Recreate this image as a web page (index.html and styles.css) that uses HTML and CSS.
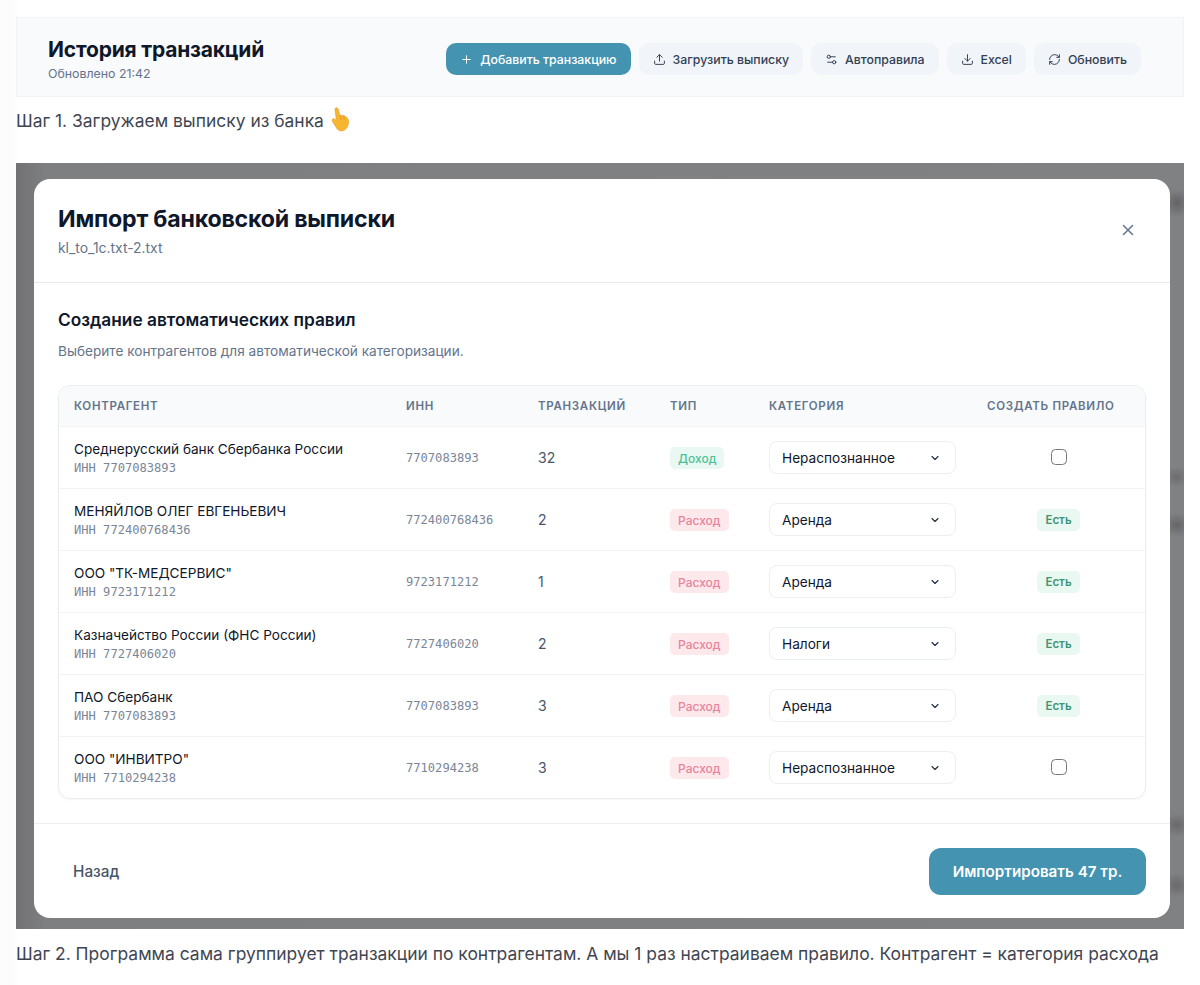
FILE: index.html
```html
<!DOCTYPE html>
<html lang="ru">
<head>
<meta charset="utf-8">
<title>История транзакций</title>
<link rel="stylesheet" href="styles.css">
</head>
<body>
<header class="topbar">
  <div class="topbar-title">
    <h1>История транзакций</h1>
    <div class="updated">Обновлено 21:42</div>
  </div>
  <div class="actions">
    <button class="btn btn-primary"><svg class="ico" viewBox="0 0 24 24"><path d="M5 12h14M12 5v14"/></svg>Добавить транзакцию</button>
    <button class="btn"><svg class="ico" viewBox="0 0 24 24"><path d="M21 15v4a2 2 0 0 1-2 2H5a2 2 0 0 1-2-2v-4"/><path d="M17 8l-5-5-5 5"/><path d="M12 3v12"/></svg>Загрузить выписку</button>
    <button class="btn"><svg class="ico" viewBox="0 0 24 24"><path d="M14 17H5"/><path d="M19 7h-9"/><circle cx="17" cy="17" r="3"/><circle cx="7" cy="7" r="3"/></svg>Автоправила</button>
    <button class="btn"><svg class="ico" viewBox="0 0 24 24"><path d="M21 15v4a2 2 0 0 1-2 2H5a2 2 0 0 1-2-2v-4"/><path d="M7 10l5 5 5-5"/><path d="M12 15V3"/></svg>Excel</button>
    <button class="btn"><svg class="ico" viewBox="0 0 24 24"><path d="M3 12a9 9 0 0 1 9-9 9.75 9.75 0 0 1 6.74 2.74L21 8"/><path d="M21 3v5h-5"/><path d="M21 12a9 9 0 0 1-9 9 9.75 9.75 0 0 1-6.74-2.74L3 16"/><path d="M8 16H3v5"/></svg>Обновить</button>
  </div>
</header>
<p class="step step-one">Шаг 1. Загружаем выписку из банка <svg class="hand" viewBox="0 0 20 26"><path class="hand-fill" d="M4.2 2.4C4 .4 7 .1 7.500 2L9.200 8.800C11 8.300 13.500 8.600 15.500 10C17.800 11.400 18.800 13.500 18.300 16.800C17.800 21 15.200 25 11 25C8 25 6.500 23.200 5 20.500L1.500 14.800C.5 13 2.300 11.300 3.800 12.500L5.800 14.200Z"/><path class="hand-line" d="M10 9.500L10.800 13M13.500 10L13.800 13.200"/></svg></p>
<section class="backdrop">
  <div class="modal">
    <div class="modal-head">
      <div>
        <h2>Импорт банковской выписки</h2>
        <div class="file">kl_to_1c.txt-2.txt</div>
      </div>
      <svg class="close" viewBox="0 0 24 24"><path d="M18 6L6 18M6 6l12 12"/></svg>
    </div>
    <div class="modal-body">
      <h3>Создание автоматических правил</h3>
      <p class="hint">Выберите контрагентов для автоматической категоризации.</p>
      <div class="table">
        <div class="row row-head">
          <div>Контрагент</div><div>ИНН</div><div>Транзакций</div><div>Тип</div><div>Категория</div><div>Создать правило</div>
        </div>
        <div class="row">
          <div><div class="name">Среднерусский банк Сбербанка России</div><div class="mono sub">ИНН 7707083893</div></div>
          <div class="mono">7707083893</div><div class="count">32</div>
          <div class="type"><span class="tag tag-in">Доход</span></div>
          <div><div class="select">Нераспознанное<svg class="chev" viewBox="0 0 24 24"><path d="M6 9l6 6 6-6"/></svg></div></div>
          <div class="rule"><span class="check"></span></div>
        </div>
        <div class="row">
          <div><div class="name">МЕНЯЙЛОВ ОЛЕГ ЕВГЕНЬЕВИЧ</div><div class="mono sub">ИНН 772400768436</div></div>
          <div class="mono">772400768436</div><div class="count">2</div>
          <div class="type"><span class="tag tag-out">Расход</span></div>
          <div><div class="select">Аренда<svg class="chev" viewBox="0 0 24 24"><path d="M6 9l6 6 6-6"/></svg></div></div>
          <div class="rule"><span class="tag tag-has">Есть</span></div>
        </div>
        <div class="row">
          <div><div class="name">ООО "ТК-МЕДСЕРВИС"</div><div class="mono sub">ИНН 9723171212</div></div>
          <div class="mono">9723171212</div><div class="count">1</div>
          <div class="type"><span class="tag tag-out">Расход</span></div>
          <div><div class="select">Аренда<svg class="chev" viewBox="0 0 24 24"><path d="M6 9l6 6 6-6"/></svg></div></div>
          <div class="rule"><span class="tag tag-has">Есть</span></div>
        </div>
        <div class="row">
          <div><div class="name">Казначейство России (ФНС России)</div><div class="mono sub">ИНН 7727406020</div></div>
          <div class="mono">7727406020</div><div class="count">2</div>
          <div class="type"><span class="tag tag-out">Расход</span></div>
          <div><div class="select">Налоги<svg class="chev" viewBox="0 0 24 24"><path d="M6 9l6 6 6-6"/></svg></div></div>
          <div class="rule"><span class="tag tag-has">Есть</span></div>
        </div>
        <div class="row">
          <div><div class="name">ПАО Сбербанк</div><div class="mono sub">ИНН 7707083893</div></div>
          <div class="mono">7707083893</div><div class="count">3</div>
          <div class="type"><span class="tag tag-out">Расход</span></div>
          <div><div class="select">Аренда<svg class="chev" viewBox="0 0 24 24"><path d="M6 9l6 6 6-6"/></svg></div></div>
          <div class="rule"><span class="tag tag-has">Есть</span></div>
        </div>
        <div class="row">
          <div><div class="name">ООО "ИНВИТРО"</div><div class="mono sub">ИНН 7710294238</div></div>
          <div class="mono">7710294238</div><div class="count">3</div>
          <div class="type"><span class="tag tag-out">Расход</span></div>
          <div><div class="select">Нераспознанное<svg class="chev" viewBox="0 0 24 24"><path d="M6 9l6 6 6-6"/></svg></div></div>
          <div class="rule"><span class="check"></span></div>
        </div>
      </div>
    </div>
    <div class="modal-foot">
      <button class="back">Назад</button>
      <button class="import">Импортировать 47 тр.</button>
    </div>
  </div>
</section>
<p class="step step-two">Шаг 2. Программа сама группирует транзакции по контрагентам. А мы 1 раз настраиваем правило. Контрагент = категория расхода</p>
</body>
</html>
```

FILE: styles.css
```css
* { box-sizing: border-box; }
html, body { margin: 0; background: #fff; }
body {
  width: 1200px;
  height: 985px;
  overflow: hidden;
  padding: 17px 16px 0;
  background: linear-gradient(90deg, #fcfcfc 0, #fcfcfc 14px, #fff 18px);
  font-family: Inter, "Noto Sans", sans-serif;
  color: #0f172a;
}
button { font-family: inherit; border: 0; }

.topbar {
  height: 80px;
  display: flex;
  align-items: center;
  justify-content: space-between;
  padding: 4px 42px 0 31px;
  background: #f9fafc;
  border: 1px solid #f1f3f6;
}
h1 { margin: 0; font-size: 21px; line-height: 26px; font-weight: 700; color: #0f172a; letter-spacing: -.2px; }
.updated { margin-top: 3px; font-size: 12.350px; line-height: 16px; color: #64748b; }
.actions { display: flex; gap: 8px; }
.btn {
  height: 32px;
  display: flex;
  align-items: center;
  gap: 7px;
  padding: 0 14px;
  border-radius: 10px;
  background: #f1f4f8;
  color: #334155;
  font-size: 12.300px;
  font-weight: 500;
}
.btn-primary { background: #4393b1; color: #fff; }
.ico { width: 13px; height: 13px; fill: none; stroke: currentColor; stroke-width: 1.800; stroke-linecap: round; stroke-linejoin: round; }

.step { margin: 0; font-size: 17.450px; line-height: 24px; color: #3f4652; }
.step-one { margin-top: 10px; height: 56px; }
.step-two { margin-top: 13px; white-space: nowrap; }
.hand { width: 19px; height: 25px; vertical-align: -5px; margin-left: 2px; }
.hand-fill { fill: #f6b62f; stroke: #e79a1f; stroke-width: .7; stroke-linejoin: round; }
.hand-line { fill: none; stroke: #e08f1c; stroke-width: .8; stroke-linecap: round; }

.backdrop {
  height: 766px;
  padding: 16px 14px 11px 18px;
  background:
    radial-gradient(ellipse 14px 14px at 1161px 40px, #636367, transparent),
    radial-gradient(ellipse 14px 10px at 1161px 314px, #6d6d70, transparent),
    radial-gradient(ellipse 14px 12px at 1161px 362px, #66666a, transparent),
    radial-gradient(ellipse 14px 12px at 1161px 662px, #69696d, transparent),
    radial-gradient(ellipse 14px 12px at 1161px 722px, #69696d, transparent),
    linear-gradient(90deg, #727274 0, #7e7f81 30px, #808183 100%);
}
.modal {
  height: 739px;
  display: flex;
  flex-direction: column;
  background: #fff;
  border-radius: 16px;
}
.modal-head {
  height: 104px;
  flex: none;
  display: flex;
  align-items: center;
  justify-content: space-between;
  padding: 0 33px 2px 24px;
  border-bottom: 1px solid #e7eaee;
}
h2 { margin: 1px 0 0; font-size: 23.150px; line-height: 30px; font-weight: 700; color: #0f172a; letter-spacing: -.2px; }
.file { margin-top: 5px; font-size: 13.900px; line-height: 18px; color: #64748b; }
.close { width: 18px; height: 18px; fill: none; stroke: #64748b; stroke-width: 2; stroke-linecap: round; stroke-linejoin: round; }

.modal-body { flex: 1; padding: 25px 24px 0; }
h3 { margin: 0; font-size: 17.270px; line-height: 24px; font-weight: 600; color: #0f172a; }
.hint { margin: 10px 0 0; font-size: 13.640px; line-height: 18px; color: #64748b; }

.table {
  margin-top: 25px;
  border: 1px solid #e9ecf0;
  border-radius: 12px;
  box-shadow: 0 1px 2px rgba(15, 23, 42, .04);
  overflow: hidden;
}
.row {
  height: 62px;
  display: grid;
  grid-template-columns: 332px 132px 132px 99px 218px 1fr;
  align-items: center;
  border-top: 1px solid #f1f3f6;
  font-size: 13.600px;
}
.row > div { padding-left: 15px; }
.row > .rule { padding-left: 0; }
.row-head {
  height: 40px;
  border-top: 0;
  background: #f8fafc;
  font-size: 11.500px;
  font-weight: 600;
  letter-spacing: .7px;
  text-transform: uppercase;
  color: #64748b;
}
.name { font-size: 13.600px; line-height: 18px; color: #0f172a; }
.mono { font-family: "DejaVu Sans Mono", "Liberation Mono", monospace; font-size: 12.100px; color: #7a8697; }
.sub { margin-top: 2px; line-height: 16px; }
.count { color: #475569; font-size: 14px; }
.type { display: flex; align-items: center; }
.tag {
  display: block;
  height: 22px;
  padding: 0 8px;
  border-radius: 5px;
  font-size: 12px;
  font-weight: 500;
  line-height: 23px;
}
.tag-in { background: #e9f8f2; color: #4cc296; }
.tag-out { background: #fde8ec; color: #e8849a; }
.tag-has { background: #e9f9f1; color: #3f9475; font-weight: 600; font-size: 11.500px; }
.rule { display: flex; justify-content: center; }
.select {
  width: 187px;
  height: 33px;
  display: flex;
  align-items: center;
  justify-content: space-between;
  padding: 0 14px 0 12px;
  border: 1.500px solid #eceff2;
  border-radius: 8px;
  background: #fff;
  font-size: 13.650px;
  color: #0f172a;
}
.chev { width: 12px; height: 12px; fill: none; stroke: #1e293b; stroke-width: 2.200; stroke-linecap: round; stroke-linejoin: round; }
.check { width: 16px; height: 16px; border: 1.500px solid #75777b; border-radius: 4.500px; background: #fff; margin-top: -1px; }

.modal-foot {
  height: 95px;
  flex: none;
  display: flex;
  align-items: center;
  justify-content: space-between;
  padding: 0 24px;
  border-top: 1px solid #eceef1;
}
.back { background: none; padding: 0 15px; font-size: 15.300px; font-weight: 500; color: #475569; }
.import {
  width: 217px;
  height: 47px;
  border-radius: 12px;
  background: #4393b1;
  color: #fff;
  font-size: 15.200px;
  font-weight: 600;
}
```
